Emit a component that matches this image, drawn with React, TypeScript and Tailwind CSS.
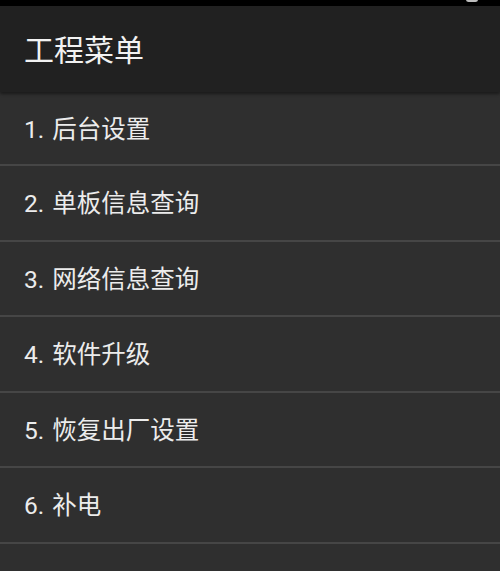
const items = ["1. 后台设置", "2. 单板信息查询", "3. 网络信息查询", "4. 软件升级", "5. 恢复出厂设置", "6. 补电"];

export default function App() {
  return (
    <div
      className="flex h-[571px] w-[500px] flex-col overflow-hidden bg-[#2f2f2f]"
      style={{ fontFamily: '"Roboto", "Noto Sans CJK SC", sans-serif' }}
    >
      {/* status bar */}
      <div className="relative h-[6px] shrink-0 bg-black">
        <div className="absolute right-[22px] top-[-3px] h-[5px] w-[12px] rounded-full bg-[#bdbdbd]" />
      </div>

      {/* action bar */}
      <header className="relative z-10 flex h-[86px] shrink-0 items-center bg-[#212121] px-6 pt-1 shadow-[0_2px_3px_rgba(0,0,0,0.45)]">
        <h1 className="text-[30px] leading-none text-[#f2f2f2]">工程菜单</h1>
      </header>

      <ul className="flex flex-col">
        {items.map((label, i) => (
          <li
            key={label}
            className={
              i === 0
                ? "flex h-[74px] items-center border-b-2 border-[#464646] px-6 pt-1 text-[24.5px] text-[#ececec] [word-spacing:2px]"
                : "flex h-[75.5px] items-center border-b-2 border-[#464646] px-6 pt-1 text-[24.5px] text-[#ececec] [word-spacing:2px]"
            }
          >
            {label}
          </li>
        ))}
      </ul>
    </div>
  );
}
